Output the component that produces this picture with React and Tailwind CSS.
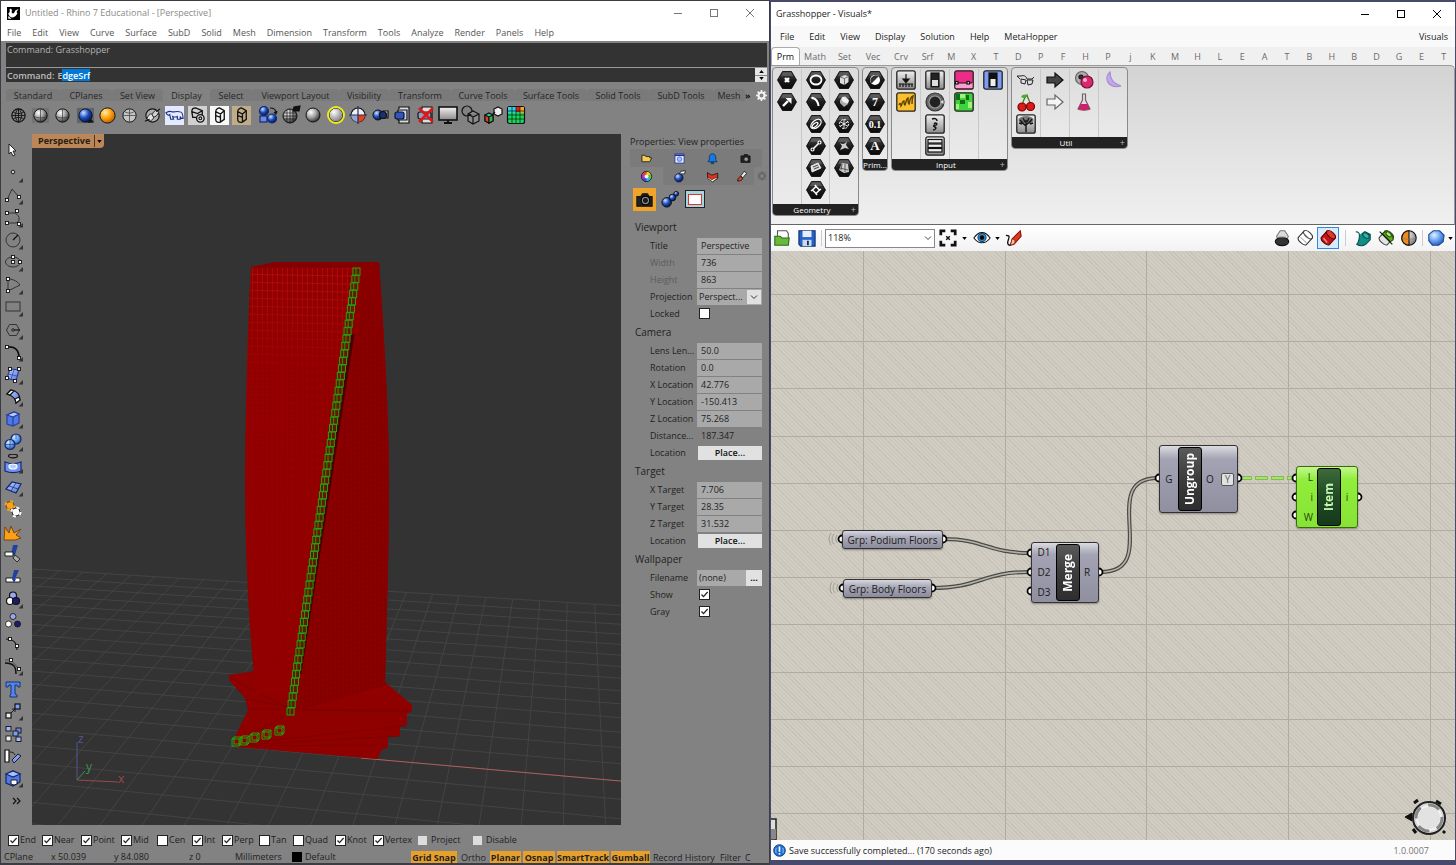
import { useEffect, useRef } from "react";

/* ---------- shared bits ---------- */

// Gradients used by many of the small icons
function SharedDefs() {
  const balls = [
    ["ballGray", "#ffffff", "#a2a2a2", "#2b2b2b"],
    ["ballBlue", "#cfe0ff", "#1d4fc4", "#04103f"],
    ["ballSky", "#dff0ff", "#6fa8f0", "#2459b8"],
    ["ballOrange", "#fff0a8", "#ffa310", "#b55c00"],
    ["ballYellow", "#ffffff", "#b9b9b9", "#777777"],
  ];
  return (
    <svg className="absolute h-0 w-0" aria-hidden="true">
      <defs>
        {balls.map(([id, a, b, c]) => (
          <radialGradient key={id} id={id} cx="35%" cy="30%" r="75%">
            <stop offset="0" stopColor={a} />
            <stop offset="0.5" stopColor={b} />
            <stop offset="1" stopColor={c} />
          </radialGradient>
        ))}
        <linearGradient id="steel" x1="0" y1="0" x2="0" y2="1">
          <stop offset="0" stopColor="#f2f2f2" />
          <stop offset="1" stopColor="#8a8a8a" />
        </linearGradient>
        <linearGradient id="bluePlate" x1="0" y1="0" x2="1" y2="1">
          <stop offset="0" stopColor="#c3d4ff" />
          <stop offset="1" stopColor="#4a6fe0" />
        </linearGradient>
        <linearGradient id="hexFill" x1="0" y1="0" x2="0" y2="1">
          <stop offset="0" stopColor="#4a4a4a" />
          <stop offset="0.5" stopColor="#1c1c1c" />
          <stop offset="1" stopColor="#0a0a0a" />
        </linearGradient>
      </defs>
    </svg>
  );
}

function Icon({ children, className = "h-5 w-5" }) {
  return (
    <svg viewBox="0 0 20 20" fill="none" stroke="#111" strokeWidth="1.2" className={`shrink-0 ${className}`} aria-hidden="true">
      {children}
    </svg>
  );
}

const Ball = ({ cx = 10, cy = 10, r = 7, fill = "url(#ballGray)" }) => (
  <circle cx={cx} cy={cy} r={r} fill={fill} stroke="#111" strokeWidth="1" />
);

// Tilted cylinder, used by the preview buttons
const Cylinder = ({ body, cap, line }) => (
  <g transform="rotate(42 10 10)" stroke={line}>
    <path d="M4 5v9c0 4 12 4 12 0V5z" fill={body} />
    <ellipse cx="10" cy="5" rx="6" ry="3" fill={cap} />
  </g>
);

function Check({ id, checked, disabled }) {
  return (
    <span className="grid shrink-0">
      <input
        id={id}
        type="checkbox"
        defaultChecked={checked}
        disabled={disabled}
        className="peer col-start-1 row-start-1 h-[11px] w-[11px] appearance-none border border-[#222] bg-white disabled:h-[9px] disabled:w-[9px] disabled:border-0 disabled:bg-[#ddd]"
      />
      <svg viewBox="0 0 11 11" className="pointer-events-none col-start-1 row-start-1 hidden h-[11px] w-[11px] peer-checked:block" aria-hidden="true">
        <path d="M2.5 5.5 4.5 7.7 8.6 3" fill="none" stroke="#222" strokeWidth="1.2" />
      </svg>
    </span>
  );
}

function WindowButtons({ color }) {
  return (
    <div className={`flex h-full ${color}`}>
      <button aria-label="Minimize" className="grid w-9 place-items-center">
        <svg viewBox="0 0 10 10" className="h-[10px] w-[10px]"><path d="M1 5.5h8" stroke="currentColor" /></svg>
      </button>
      <button aria-label="Maximize" className="grid w-9 place-items-center">
        <svg viewBox="0 0 10 10" className="h-[10px] w-[10px]"><rect x="1.5" y="1.5" width="7" height="7" fill="none" stroke="currentColor" /></svg>
      </button>
      <button aria-label="Close" className="grid w-9 place-items-center">
        <svg viewBox="0 0 10 10" className="h-[10px] w-[10px]"><path d="m1 1 8 8M9 1 1 9" stroke="currentColor" /></svg>
      </button>
    </div>
  );
}

/* ---------- Rhino: data ---------- */

const RHINO_MENU = ["File", "Edit", "View", "Curve", "Surface", "SubD", "Solid", "Mesh", "Dimension", "Transform", "Tools", "Analyze", "Render", "Panels", "Help"];

const TOOL_TABS = [
  ["Standard", "w-[54px]"],
  ["CPlanes", "w-[52px]"],
  ["Set View", "w-[51px]"],
  ["Display", "w-[47px]"],
  ["Select", "w-[42px]"],
  ["Viewport Layout", "w-[87px]"],
  ["Visibility", "w-[50px]"],
  ["Transform", "w-[62px]"],
  ["Curve Tools", "w-[64px]"],
  ["Surface Tools", "w-[72px]"],
  ["Solid Tools", "w-[62px]"],
  ["SubD Tools", "w-[64px]"],
  ["Mesh", "w-8"],
];

const globe = <path d="M10 3v14M3 10h14M4.5 6.5c3 2 8 2 11 0M4.5 13.5c3-2 8-2 11 0M10 3c-4.500 4-4.500 10 0 14M10 3c4.500 4 4.500 10 0 14" strokeWidth="0.9" />;
const penBox = <path d="M6 6c0-3 3-4 4-4l5 3v9l-4 3c-4 1-5-1-5-3zM6 6l5 2.500 4-3.500M11 8.500V17M6 10l5 2" strokeWidth="1.400" />;

const DISPLAY_ICONS_A = [
  ["Wireframe", <><circle cx="10" cy="10" r="7" />{globe}</>],
  ["Shaded", <><rect x="1" y="2" width="18" height="16" fill="#747474" stroke="none" /><Ball /><path d="M10 3v14M3 11c4 2 10 2 14 0" stroke="#333" strokeWidth="0.7" /></>],
  ["Shade selected", <><Ball /><path d="M10 3v14M3 11c4 2 10 2 14 0" stroke="#333" strokeWidth="0.7" /></>],
  ["Rendered", <><path d="M1 2h18v16H1z" fill="#5e6470" stroke="none" /><Ball fill="url(#ballBlue)" /><path d="m12 18 7-1-3-3z" fill="#111" stroke="none" /></>],
  ["Raytraced", <Ball fill="url(#ballOrange)" r={8} />],
  ["Ghosted", <><Ball fill="#c6c6c6" /><path d="M10 3v14M3 10h14M5 6c3 2 7 2 10 0" stroke="#444" strokeWidth="0.8" /></>],
  ["X-Ray", <><circle cx="10" cy="10" r="7" fill="#b0b0b0" /><ellipse cx="8" cy="12" rx="3" ry="4" transform="rotate(40 8 12)" fill="#e4e4e4" strokeWidth="0.800" /><ellipse cx="13" cy="8" rx="2.500" ry="4" transform="rotate(40 13 8)" fill="#d0d0d0" strokeWidth="0.800" /><path d="m2 16 5-2M14 6l4-3" /></>],
  ["Artistic", <><rect width="20" height="20" fill="#e4eaff" stroke="none" /><path d="M1 7c1 3 3 3 4 2l1 5h3l-1-3c2 1 3 1 5 0v3h3v-3l1 2h2c0-5-1-7-4-7-4-1-5 1-8 0-2-1-4 0-6 1z" stroke="#1c2f8f" strokeWidth="1.200" /></>],
  ["Pen", <><rect width="20" height="20" fill="#d0d0d0" stroke="none" /><path d="M4 6c0-3 2-4 4-4l7 3v4l-4 3H5zM4 6l6 2 5-3" strokeWidth="1.400" /><circle cx="13" cy="13" r="4" fill="#ddd" strokeWidth="1.400" /><circle cx="13" cy="13" r="1.500" /></>],
  ["Technical", <><rect width="20" height="20" fill="#f8f8f8" stroke="none" />{penBox}</>],
  ["Monochrome", <><rect width="20" height="20" fill="#c0ad88" stroke="none" />{penBox}</>],
];

const DISPLAY_ICONS_B = [
  ["Sync views", <><circle cx="6" cy="6" r="4.500" fill="url(#ballBlue)" stroke="#14296b" /><rect x="2" y="11" width="7" height="6" fill="#6b8be6" stroke="#14296b" /><circle cx="14" cy="13.500" r="4.500" fill="url(#ballBlue)" stroke="#14296b" /><path d="M12 3c4 0 6 2 6 5m-2-1 2 2 1-3" /></>],
  ["Flat shade", <><Ball cx={9} cy={11} /><path d="M9 4v14M2 11h14M3 8h12M3 14h12M6 5v12M12 5v12" strokeWidth="0.7" /><path d="m12 6 1-4 6-1-1 5z" fill="#111" /></>],
  ["Matte", <Ball />],
  ["Edges on", <><Ball r={7} fill="url(#ballYellow)" /><circle cx="10" cy="10" r="8" fill="none" stroke="#f0ea20" strokeWidth="2" /></>],
  ["Clipping", <><circle cx="10" cy="10" r="7" fill="#f0f0f4" /><path d="M10 10h7a7 7 0 0 1-7 7z" fill="#e8401c" stroke="none" /><path d="M10 10H3a7 7 0 0 0 7 7z" fill="#8fa6cf" stroke="none" /><path d="M10 1v18M1 10h18" stroke="#20315e" /></>],
  ["Cylinder", <><Ball cx={7} cy={10} r={5} fill="url(#ballBlue)" /><path d="M12 6h5v7h-5z" fill="url(#steel)" /><circle cx="12" cy="10" r="3.500" fill="#1c2f6f" /></>],
  ["Capture", <><path d="M6 4V2h10v16H6v-3" fill="#ddd" /><path d="M5 5h9v10H5z" fill="#c9d4f2" /><rect x="2" y="7" width="9" height="7" rx="2" fill="#3056c4" /></>],
  ["Capture off", <><path d="M6 4V2h10v16H6v-3" fill="#ddd" /><rect x="2" y="7" width="13" height="7" rx="2" fill="#8f9bc4" /><path d="m3 3 14 14M17 3 3 17" stroke="#e01515" strokeWidth="2.600" /></>],
  ["Full screen", <><rect x="1" y="2" width="18" height="13" fill="url(#steel)" strokeWidth="1.600" /><path d="M6 18h8M10 15v3" strokeWidth="2" /></>],
  ["Options", <><circle cx="6" cy="6" r="5" /><path d="m7 9 5-3 6 3v7l-6 3-5-3zM7 9l5 3 6-3M12 12v7" fill="#8c8c8c" /></>],
  ["Colors", <><path d="m2 10 4-2 4 2v6l-4 2-4-2z" fill="#23c9a0" /><path d="m2 10 4 2v6l-4-2z" fill="#e33d28" /><path d="m6 12 4-2v6l-4 2z" fill="#35b843" /><path d="m11 4 4-2 4 2v5l-4 2-4-2z" fill="#eee" /><path d="m9 10 3-3" /></>],
  ["Layers", <><rect x="1.500" y="1.500" width="17" height="17" rx="2" fill="#16d95a" /><path d="M2 2h8v6H2z" fill="#28d4e6" stroke="none" /><path d="M10 2h4v5h-4z" fill="#d22" stroke="none" /><path d="M14 2h4v6h-4z" fill="#f6a31a" stroke="none" /><path d="M6 2v16M10 2v16M14 2v16M2 6h16M2 10h16M2 14h16" strokeWidth="0.700" /></>],
];

const pt = (x, y) => <rect key={`${x}-${y}`} x={x - 1.5} y={y - 1.5} width="3" height="3" fill="#fff" stroke="#111" strokeWidth="0.9" />;

// [name, has fly-out corner, drawing]
const SIDE_TOOLS = [
  ["Select", false, <path d="M6 4v10l2-2 2 4 2-1-2-4h3z" fill="#fff" strokeWidth="0.900" />],
  ["Point", true, <circle cx="10" cy="9" r="1.800" fill="#ccc" strokeWidth="0.900" />],
  ["Polyline", true, <><path d="m4 15 5-11 7 8" stroke="#333" strokeWidth="1" />{pt(4, 15)}{pt(16, 12)}</>],
  ["Curve", true, <><path d="M4 5h8c6 3 5 10 0 10H4" stroke="#333" strokeWidth="1" />{pt(4, 5)}{pt(14, 3)}{pt(4, 15)}{pt(16, 16)}</>],
  ["Circle", true, <><circle cx="10" cy="10" r="7" stroke="#333" strokeWidth="1" /><path d="m10 10 5-5" /></>],
  ["Ellipse", true, <><ellipse cx="10" cy="10" rx="7.500" ry="5" stroke="#333" strokeWidth="1" />{pt(10, 5)}{pt(10, 10)}{pt(17, 10)}</>],
  ["Arc", true, <><path d="M5 4c6 0 10 3 12 6L5 16z" stroke="#333" strokeWidth="1" />{pt(5, 4)}{pt(5, 16)}</>],
  ["Rectangle", true, <rect x="3" y="5" width="14" height="9" stroke="#333" strokeWidth="1" />],
  ["Polygon", true, <><path d="M6.500 4.500h7l3 5.500-3 5.500h-7L3.500 10z" stroke="#333" strokeWidth="1" /><circle cx="10" cy="10" r="1.300" strokeWidth="0.800" /><path d="M11 10h6" /></>],
  ["Fillet", true, <><path d="M4 5c9-1 12 4 12 11" strokeWidth="1.800" />{pt(4, 5)}{pt(16, 16)}</>],
  ["Surface", true, <><path d="m7 4 9 1-3 11-9-3z" fill="url(#bluePlate)" stroke="#2a3f9a" /><path d="m5 9 9 2M11 5l-3 9" stroke="#2a3f9a" strokeWidth="0.700" />{pt(7, 4)}{pt(16, 4)}{pt(12, 16)}{pt(4, 13)}</>],
  ["Sweep", true, <><path d="m4 7 4-4c6 1 9 5 9 10l-4 3c0-4-3-7-9-9z" fill="url(#bluePlate)" /><path d="m4 7 4-4 3 1-4 4z" fill="#fff" /><path d="m13 16-1-4 4-2 1 3z" fill="#fff" /></>],
  ["Box", true, <><path d="m4 6 7-3 5 2v9l-6 3-6-2z" fill="#4f79e6" stroke="#2a3f9a" /><path d="m4 6 6 2 6-3-5-2z" fill="#b7cbff" stroke="#2a3f9a" /><path d="M10 8v9" stroke="#2a3f9a" /></>],
  ["Boolean", true, <><circle cx="13" cy="7" r="5" fill="url(#ballSky)" stroke="#14296b" /><circle cx="7" cy="12.500" r="5" fill="url(#ballSky)" stroke="#14296b" /><path d="M7 7.500v10M2 12.500h10M13 2v5" stroke="#14296b" strokeWidth="0.600" /></>],
  ["Project", true, <><ellipse cx="10" cy="2" rx="4.500" ry="1.800" /><path d="M2 8c5 2 11 2 16 0v9c-5 2-11 2-16 0z" fill="#6f92f2" stroke="#14296b" /><ellipse cx="10" cy="12.500" rx="4" ry="2.500" fill="#b7cbff" stroke="#fff" /></>],
  ["Mesh", true, <><path d="m3 12 6-7 9 2-5 9z" fill="url(#bluePlate)" stroke="#14296b" /><path d="m6 9 9 3M13 6l-5 8" stroke="#14296b" strokeWidth="0.700" /></>],
  ["Join", false, <><circle cx="7" cy="6.500" r="4" fill="#f5a51f" stroke="#5c3a00" strokeWidth="0.900" /><circle cx="7" cy="6.500" r="4.500" stroke="#f5a51f" strokeWidth="2" strokeDasharray="3 4" /><circle cx="13" cy="13" r="4" fill="#fff" strokeWidth="0.900" /><circle cx="13" cy="13" r="4.500" stroke="#fff" strokeWidth="2" strokeDasharray="3 4" /></>],
  ["Explode", false, <path d="m1 18 1-13 4 6 2-7 3 7 7-4-5 6 5 3-6 2z" fill="#f9a01b" stroke="#7a3b00" strokeWidth="0.900" />],
  ["Trim", false, <><path d="M10 1h5l-3 10H8z" fill="#20429c" stroke="none" /><path d="M2 8h8v4H2z" fill="#fff" strokeWidth="0.900" /><path d="m12 11 5 4-3 3-4-4z" fill="#aaa" strokeWidth="0.800" /></>],
  ["Split", false, <><path d="M3 11h14v4H3z" fill="#fff" strokeWidth="0.900" /><path d="M11 3h5l-4 9h-3zM9 12l2 4 2-4z" fill="#20429c" stroke="none" /></>],
  ["Group", true, <><circle cx="10" cy="6.500" r="3.500" fill="#9aa6f0" /><circle cx="7" cy="12" r="3.500" fill="#fff" /><circle cx="13" cy="12" r="3.500" fill="#1a1c6d" /></>],
  ["Ungroup", false, <><circle cx="10" cy="5.500" r="3" fill="#9aa6f0" strokeWidth="0.800" /><circle cx="5.500" cy="13" r="3" fill="#fff" strokeWidth="0.800" /><circle cx="14.500" cy="13" r="3" fill="#1a1c6d" strokeWidth="0.800" /></>],
  ["Edit points", false, <><path d="M3 5c8 0 11 4 11 11" />{pt(7, 5)}{pt(14, 12)}</>],
  ["Control points", true, <><path d="M2 7c9 0 11 4 11 11" strokeWidth="1.500" /><path d="M2 4h6l8 9" stroke="#444" strokeWidth="0.8" />{pt(8, 4)}{pt(16, 13)}</>],
  ["Text", false, <path d="M3 3h14v5h-2l-1-2h-2v9l2 1v2H7v-2l1-1V6H6L5 8H3z" fill="#4f86f0" stroke="#14296b" strokeWidth="0.900" />],
  ["Move", true, <><rect x="3" y="12" width="5" height="5" fill="#eee" /><rect x="12" y="3" width="5" height="5" fill="#7d9df5" /><path d="m8 12 4-4m-3 0h3v3" strokeWidth="0.900" /></>],
  ["Copy", false, <><rect x="3" y="2.500" width="5" height="4.500" fill="#9fb8ff" strokeWidth="0.900" /><rect x="13" y="4" width="5" height="5" fill="#6b8be6" strokeWidth="0.900" /><rect x="10" y="7" width="5" height="5" fill="#7d9df5" strokeWidth="0.900" /><rect x="3" y="12" width="5" height="5" fill="#eee" strokeWidth="0.900" /><rect x="13" y="13" width="5" height="4.500" fill="#9fb8ff" strokeWidth="0.900" /></>],
  ["Rotate", false, <><path d="M2 4h4v12H2z" fill="#fff" /><path d="m9 14 6-6 3 2-7 7z" fill="#7d9df5" strokeWidth="0.900" /><path d="M7 6c3 0 4 1 5 3" strokeWidth="0.900" /></>],
  ["Solid edit", true, <><path d="m3 6 7-3 7 3v8l-7 4-7-3z" fill="#4f79e6" stroke="#14296b" /><path d="m3 6 7-3 7 3-7 3z" fill="#a9c0ff" stroke="#14296b" /><path d="M8 12h6v4l-3 1-3-1z" fill="#fff" strokeWidth="0.900" /></>],
  ["More", false, <path d="m10 7 3 3-3 3m4-6 3 3-3 3" strokeWidth="1.200" />],
];

const PANEL_TABS_TOP = [
  ["Files", <path d="M3 15V5h5l1 2h6v2h3l-3 6z" fill="#f6cf52" />],
  ["Display", <><rect x="3" y="3" width="14" height="14" fill="#e6ecff" stroke="#1c2f8f" /><path d="M3 5h14" stroke="#1c2f8f" strokeWidth="2.500" /><circle cx="10" cy="11" r="3.500" stroke="#3c63d8" fill="#a9c0ff" /></>],
  ["Notifications", <path d="M3 15h14l-2-3V8c0-7-10-7-10 0v4zM8 16h4v2H8z" fill="#1678e0" stroke="#08345f" />],
  ["Camera", <><path d="M3 6h4l1-2h5l1 2h3v10H3z" fill="#222" /><circle cx="11" cy="11" r="3.500" fill="#999" /></>],
];

const PANEL_TABS_BOTTOM = [
  ["Layers", <><path d="M10 10V2a8 8 0 0 1 7 4z" fill="#f7d21b" stroke="none" /><path d="m10 10 7-4a8 8 0 0 1 0 8z" fill="#58c93b" stroke="none" /><path d="m10 10 7 4a8 8 0 0 1-7 4z" fill="#2ab8d8" stroke="none" /><path d="M10 10v8a8 8 0 0 1-7-4z" fill="#3a4be0" stroke="none" /><path d="m10 10-7 4a8 8 0 0 1 0-8z" fill="#b52ad8" stroke="none" /><path d="M10 10 3 6a8 8 0 0 1 7-4z" fill="#f0402a" stroke="none" /><circle cx="10" cy="10" r="3" fill="#f3f3f3" stroke="none" /><circle cx="10" cy="10" r="8" /></>],
  ["Properties", <><Ball cx={9} cy={12} r={6.5} fill="url(#ballBlue)" /><path d="m10 6 2-4 7-1-1 5z" fill="#eee" /></>],
  ["Materials", <><path d="m2 4 7 4 9-3v8l-8 5-7-5z" fill="#e33214" /><path d="m3 11 6 4 8-4v2l-7 5-7-5z" fill="#fff" strokeWidth="0.800" /></>],
  ["Paint", <><path d="m9 9 5-7 4 3-6 7z" fill="#e8e8e8" /><path d="M4 17c0-4 2-6 5-7l3 3c-1 3-4 4-8 4z" fill="#d8402c" /></>],
];

/* ---------- Rhino: perspective viewport ---------- */

// Camera of the viewport, same numbers as the properties panel
const CAM = [42.776, -150.413, 75.268];
const FWD = [-0.1872, 0.9543, -0.2335];
const RIGHT = [0.9813, 0.1925, 0];
const UP = [-0.0449, 0.2291, 0.9725];
const dot = (a, b) => a[0] * b[0] + a[1] * b[1] + a[2] * b[2];

function project(x, y, z = 0) {
  const d = [x - CAM[0], y - CAM[1], z - CAM[2]];
  const depth = dot(d, FWD);
  return [(294.5 + (dot(d, RIGHT) / depth) * 1227).toFixed(1), (345.5 - (dot(d, UP) / depth) * 1227).toFixed(1)];
}

function GroundLine({ from, to, stroke = "#484848" }) {
  const [x1, y1] = project(...from);
  const [x2, y2] = project(...to);
  return <line x1={x1} y1={y1} x2={x2} y2={y2} stroke={stroke} strokeWidth="0.8" />;
}

const STEPS = Array.from({ length: 29 }, (_, i) => -70 + i * 5);
const FLOORS = Array.from({ length: 60 }, (_, i) => i / 59);

function Scene() {
  return (
    <svg viewBox="0 0 589 691" preserveAspectRatio="xMinYMin slice" className="h-full w-full" role="img" aria-label="Tower model in perspective">
      <defs>
        <pattern id="cells" width="5" height="8" patternUnits="userSpaceOnUse" patternTransform="skewY(1)">
          <path d="M0 0h5M0 0v8" stroke="#e01818" strokeWidth="0.8" fill="none" />
          <path d="M2 2v6" stroke="#7d0000" strokeWidth="0.6" />
        </pattern>
        <pattern id="darkCells" width="4" height="5" patternUnits="userSpaceOnUse" patternTransform="skewY(-12)">
          <path d="M0 0h4M0 0v5" stroke="#5c0000" strokeWidth="0.7" fill="none" />
        </pattern>
        <linearGradient id="cellFade" x1="0" y1="0" x2="0" y2="1">
          <stop offset="0" stopColor="#fff" stopOpacity="0.9" />
          <stop offset="0.25" stopColor="#fff" stopOpacity="0.15" />
          <stop offset="1" stopColor="#fff" stopOpacity="0.02" />
        </linearGradient>
        <mask id="cellMask"><rect x="200" y="130" width="180" height="420" fill="url(#cellFade)" /></mask>
      </defs>

      {/* Ground grid */}
      {STEPS.map((s) => <GroundLine key={`x${s}`} from={[s, 70]} to={[s, -60]} />)}
      {STEPS.map((s) => <GroundLine key={`y${s}`} from={[-70, s]} to={[70, s]} />)}
      <GroundLine from={[18, 0]} to={[70, 0]} stroke="#c86464" />

      {/* Podium */}
      <path d="M197 541 223 537 230 520H348L353 548 380 571V577L375 580V591L368 592V602L356 603V613L350 616 345 625 203 613 201 607 216 576 213 564 197 546z" fill="#8f0000" />
      <g stroke="#7a0000" strokeWidth="0.7" fill="none">
        <path d="m204 608 60-32h115M206 610l168-18M207 611l160-9M208 612l146-1M200 545l60 31M216 575l160 3M214 565l60 11" />
      </g>

      {/* Tower */}
      <path d="M219 133 244 128 347 128C352 200 357 280 357 346 357 430 354 500 353 560H224C215 480 213 400 213 336 214 270 215 200 219 133z" fill="#920000" />
      <path d="M219 134 328 134 258 560H224C215 480 213 400 213 336 214 270 215 200 219 134z" fill="url(#cells)" mask="url(#cellMask)" />
      <path d="M219 133 244 128H347l-18 6z" fill="#850000" />
      <path d="M330 134 347 128C352 200 357 280 357 346 357 430 354 500 353 552L268 576 258 584z" fill="#8a0000" />
      <path d="M335 150 350 200C356 300 358 400 353 552L264 576z" fill="url(#darkCells)" opacity="0.5" />

      {/* Selected boxes running up the edge */}
      <path d="M321 200 268 540" stroke="#2d0000" strokeWidth="3" opacity="0.7" />
      {FLOORS.map((t) => {
        const x = 259 + t * 66;
        const y = 578 - t * 440;
        return (
          <g key={t} fill="none" stroke="#1fa70c" strokeWidth="1">
            <rect x={x - 4} y={y - 4} width="7" height="7" fill="#3a2a00" fillOpacity="0.5" />
            <path d={`M${x - 1} ${y - 4}v7`} strokeWidth="0.9" />
          </g>
        );
      })}
      {[[204, 608], [212, 607], [222, 604], [234, 601], [247, 597]].map(([x, y]) => (
        <g key={x} fill="none" stroke="#1fa70c" strokeWidth="1">
          <path d={`M${x - 4} ${y - 3}h7v7h-7zM${x - 2} ${y - 5}h7v7h-7zM${x - 4} ${y - 3}l2-2M${x + 3} ${y - 3}l2-2M${x + 3} ${y + 4}l2-2`} />
        </g>
      ))}

      {/* Axis marker */}
      <g fill="none" strokeWidth="1">
        <path d="M45 646v-38" stroke="#55559a" />
        <path d="m45 646 8-9" stroke="#3f9150" />
        <path d="m45 646 41 2" stroke="#9a4a4a" />
      </g>
      <g fontFamily="'Open Sans', sans-serif" fontSize="12">
        <text x="46" y="609" fill="#55559a">z</text>
        <text x="54" y="637" fill="#3f9150">y</text>
        <text x="86" y="649" fill="#9a4a4a">x</text>
      </g>
    </svg>
  );
}

/* ---------- Rhino: properties panel ---------- */

function PropRow({ label, dim, children, id }) {
  return (
    <div className="flex h-[17px] items-center">
      <label htmlFor={id} className={`w-[47px] shrink-0 whitespace-nowrap ${dim ? "text-[#5c5c5c]" : "text-[#1f1f1f]"}`}>{label}</label>
      <div className="flex w-[65px] items-center">{children}</div>
    </div>
  );
}

function Field({ id, value }) {
  return <input id={id} defaultValue={value} className="h-4 w-full bg-[#a9a9a9] px-1 text-[#1f1f1f]" />;
}

const PropHeading = ({ children }) => <h3 className="flex h-5 items-center pl-[5px] text-[10px] text-[#1f1f1f]">{children}</h3>;

const PlaceButton = ({ id }) => (
  <button id={id} className="ml-px h-[14px] w-full bg-[#e1e1e1] font-semibold leading-[13px] text-[#111]">Place...</button>
);

function PropertiesPanel() {
  return (
    <aside className="w-[148px] shrink-0 overflow-hidden pl-[9px]">
      <h2 className="flex h-[15px] items-center text-[#1f1f1f]">Properties: View properties</h2>
      <div className="flex h-[18px]">
        {PANEL_TABS_TOP.map(([name, art]) => (
          <button key={name} aria-label={name} className="grid w-[33px] place-items-center bg-[#7b7b7b]"><Icon className="h-[13px] w-[13px]">{art}</Icon></button>
        ))}
      </div>
      <div className="flex h-[18px] items-center">
        {PANEL_TABS_BOTTOM.map(([name, art], i) => (
          <button key={name} aria-label={name} className={`grid h-full place-items-center ${i === 0 ? "" : "bg-[#7b7b7b]"} ${i === 3 ? "w-[25px]" : "w-[33px]"}`}><Icon className="h-[13px] w-[13px]">{art}</Icon></button>
        ))}
        <button aria-label="Panel options" className="ml-[3px]">
          <Icon className="h-[10px] w-[10px]"><circle cx="10" cy="10" r="6" stroke="#6b6b6b" strokeWidth="4" /><path d="M10 0v20M0 10h20M3 3l14 14M17 3 3 17" stroke="#6b6b6b" strokeWidth="2" /><circle cx="10" cy="10" r="3" fill="#828282" stroke="none" /></Icon>
        </button>
      </div>
      <div className="flex h-7 items-center gap-[3px] pl-[3px]">
        <button aria-label="Viewport" className="grid h-[23px] w-[23px] place-items-center bg-[#f0a52a]">
          <Icon className="h-[19px] w-[19px]"><path d="M2 7h4l2-3h5l2 3h3v10H2z" fill="#222" /><circle cx="11" cy="11" r="4.500" fill="#8a8a8a" stroke="#000" /><circle cx="11" cy="11" r="2" fill="#222" /></Icon>
        </button>
        <button aria-label="Material" className="grid h-[23px] w-[23px] place-items-center">
          <Icon className="h-[19px] w-[19px]"><Ball cx={6} cy={13} r={5} fill="url(#ballBlue)" /><Ball cx={12} cy={8} r={3.5} fill="url(#ballBlue)" /><Ball cx={16} cy={4} r={2.5} fill="url(#ballBlue)" /></Icon>
        </button>
        <button aria-label="Frame" className="grid h-[18px] w-[20px] place-items-center border border-[#222] bg-[#a9d4e0]">
          <span className="h-[11px] w-[14px] border border-[#d83a2a] bg-white" />
        </button>
      </div>

      <div className="pt-1">
        <PropHeading>Viewport</PropHeading>
        <div className="pl-5">
          <PropRow label="Title" id="title"><Field id="title" value="Perspective" /></PropRow>
          <PropRow label="Width" id="width" dim><Field id="width" value="736" /></PropRow>
          <PropRow label="Height" id="height" dim><Field id="height" value="863" /></PropRow>
          <PropRow label="Projection" id="projection">
            <span className="grid h-4 w-full">
              <select id="projection" className="col-start-1 row-start-1 w-full appearance-none bg-[#a9a9a9] px-[2px] text-[#1f1f1f]"><option>Perspect...</option></select>
              <span className="pointer-events-none col-start-1 row-start-1 my-px mr-px grid w-[14px] place-items-center justify-self-end bg-[#e1e1e1]">
                <svg viewBox="0 0 8 8" className="h-2 w-2"><path d="m1 2.500 3 3 3-3" fill="none" stroke="#333" /></svg>
              </span>
            </span>
          </PropRow>
          <PropRow label="Locked" id="locked"><span className="pl-[2px]"><Check id="locked" /></span></PropRow>
        </div>
        <PropHeading>Camera</PropHeading>
        <div className="pl-5">
          <PropRow label="Lens Len..." id="lens"><Field id="lens" value="50.0" /></PropRow>
          <PropRow label="Rotation" id="rot"><Field id="rot" value="0.0" /></PropRow>
          <PropRow label="X Location" id="xl"><Field id="xl" value="42.776" /></PropRow>
          <PropRow label="Y Location" id="yl"><Field id="yl" value="-150.413" /></PropRow>
          <PropRow label="Z Location" id="zl"><Field id="zl" value="75.268" /></PropRow>
          <PropRow label="Distance..."><output className="px-1 text-[#1f1f1f]">187.347</output></PropRow>
          <PropRow label="Location" id="camPlace"><PlaceButton id="camPlace" /></PropRow>
        </div>
        <PropHeading>Target</PropHeading>
        <div className="pl-5">
          <PropRow label="X Target" id="xt"><Field id="xt" value="7.706" /></PropRow>
          <PropRow label="Y Target" id="yt"><Field id="yt" value="28.35" /></PropRow>
          <PropRow label="Z Target" id="zt"><Field id="zt" value="31.532" /></PropRow>
          <PropRow label="Location" id="tgtPlace"><PlaceButton id="tgtPlace" /></PropRow>
        </div>
        <PropHeading>Wallpaper</PropHeading>
        <div className="pl-5">
          <PropRow label="Filename" id="file">
            <input id="file" defaultValue="(none)" className="h-4 w-[49px] bg-[#a9a9a9] px-[2px] text-[#1f1f1f]" />
            <button aria-label="Browse" className="h-4 w-4 bg-[#e1e1e1] font-bold leading-none text-[#111]">...</button>
          </PropRow>
          <PropRow label="Show" id="show"><span className="pl-[2px]"><Check id="show" checked /></span></PropRow>
          <PropRow label="Gray" id="gray"><span className="pl-[2px]"><Check id="gray" checked /></span></PropRow>
        </div>
      </div>
    </aside>
  );
}

/* ---------- Rhino: window ---------- */

const OSNAPS = [
  ["End", true, "w-[34px]"],
  ["Near", true, "w-[39px]"],
  ["Point", true, "w-10"],
  ["Mid", true, "w-9"],
  ["Cen", false, "w-[35px]"],
  ["Int", true, "w-[30px]"],
  ["Perp", true, "w-[37px]"],
  ["Tan", false, "w-[34px]"],
  ["Quad", false, "w-[42px]"],
  ["Knot", true, "w-[38px]"],
  ["Vertex", true, "w-[45px]"],
];

function CommandPrompt() {
  const ref = useRef(null);

  // Auto-complete leaves the completed part selected
  useEffect(() => {
    ref.current.focus();
    ref.current.setSelectionRange(1, 7);
  }, []);

  return (
    <div className="flex h-[14px] items-center bg-[#333] pl-px font-semibold text-[#bdbdbd]">
      <label htmlFor="command" className="pr-[3px] leading-none">Command:</label>
      <input ref={ref} id="command" defaultValue="EdgeSrf" className="h-3 min-w-0 flex-1 bg-transparent leading-none outline-none selection:bg-[#0078d7] selection:text-white" />
      <span className="flex h-full w-3 flex-col bg-[#e6e6e6]">
        <button aria-label="Previous command" className="grid flex-1 place-items-center"><svg viewBox="0 0 6 4" className="h-[3px] w-[5px]"><path d="m0 4 3-4 3 4z" /></svg></button>
        <button aria-label="Next command" className="grid flex-1 place-items-center border-t border-[#888]"><svg viewBox="0 0 6 4" className="h-[3px] w-[5px]"><path d="m0 0 3 4 3-4z" /></svg></button>
      </span>
    </div>
  );
}

function RhinoWindow() {
  return (
    <section className="flex min-h-0 min-w-0 flex-col overflow-hidden border-x border-t border-b-2 border-[#3c3c44] bg-[#828282] text-[9px]">
      <header className="flex h-6 shrink-0 items-center justify-between bg-white pr-px pl-[6px]">
        <div className="flex items-center gap-[5px] text-[#8a8a8a]">
          <Icon className="h-[13px] w-[13px]"><rect width="20" height="20" fill="#000" stroke="none" /><path d="M4 3c4-1 4 3 3 5 2 3 4 2 5-1 1-2 3-3 6-3-3 2-4 3-2 6-2 3-3 5-7 6-4 0-6-2-7-6 1-1 3-2 2-7z" fill="#fff" stroke="none" /><path d="m2 14 5 4H2z" fill="#fff" stroke="none" /></Icon>
          <h1>Untitled - Rhino 7 Educational - [Perspective]</h1>
        </div>
        <WindowButtons color="text-[#777]" />
      </header>
      <nav className="flex h-4 shrink-0 items-center gap-[11px] bg-white pl-[6px] text-[#555]">
        {RHINO_MENU.map((item) => <button key={item}>{item}</button>)}
      </nav>

      <div className="shrink-0 pt-[2px] pr-[2px] pb-[7px] pl-[5px]">
        <div className="h-6 bg-[#333] pl-px leading-[14px] text-[#b4b4b4]">Command: Grasshopper</div>
        <div className="h-px bg-[#999]" />
        <CommandPrompt />
      </div>

      <div className="flex h-3 shrink-0 items-center pl-[5px] text-[#262626]">
        {TOOL_TABS.map(([label, width]) => (
          <button key={label} className={`h-full shrink-0 whitespace-nowrap rounded-t leading-[13px] ${width} ${label === "Display" ? "" : "bg-[#7a7a7a]"}`}>{label}</button>
        ))}
        <button aria-label="More tabs" className="font-bold leading-none text-[#111]">»</button>
        <button aria-label="Toolbar options" className="ml-auto pr-[2px]">
          <Icon className="h-[11px] w-[11px]"><circle cx="10" cy="10" r="5.500" stroke="#f2f2f2" strokeWidth="4" /><path d="M10 0v4M10 16v4M0 10h4M16 10h4M3 3l3 3M14 14l3 3M17 3l-3 3M6 14l-3 3" stroke="#f2f2f2" strokeWidth="3" /></Icon>
        </button>
      </div>

      <div className="flex h-[33px] shrink-0 items-start gap-1 pt-[3px] pl-[6px]">
        <div className="flex w-[246px]">
          {DISPLAY_ICONS_A.map(([name, art]) => <button key={name} aria-label={name} className="grid h-[22px] flex-1 place-items-center"><Icon className="h-[19px] w-[19px]">{art}</Icon></button>)}
        </div>
        <div className="flex w-[270px]">
          {DISPLAY_ICONS_B.map(([name, art]) => <button key={name} aria-label={name} className="grid h-[22px] flex-1 place-items-center"><Icon className="h-5 w-5">{art}</Icon></button>)}
        </div>
      </div>

      <div className="flex min-h-0 flex-1">
        <div className="flex w-[31px] shrink-0 flex-col pt-[5px] pb-[13px] pl-[2px]">
          {SIDE_TOOLS.map(([name, flyout, art]) => (
            <button key={name} aria-label={name} className="flex min-h-0 flex-1 items-center">
              <Icon>{art}{flyout && <path d="M20 15v4.500h-4.500z" fill="#333" stroke="none" />}</Icon>
            </button>
          ))}
        </div>
        <main className="relative min-w-0 flex-1 overflow-hidden bg-[#333]">
          <Scene />
          <button className="absolute top-0 left-0 flex h-[14px] items-center rounded-br bg-[#bb8759] pr-[2px] pl-[6px] font-bold text-[#2a1b10]">
            Perspective
            <span className="ml-1 grid h-3 place-items-center border-l border-[#4a3520] pl-[2px]">
              <svg viewBox="0 0 6 4" className="h-[3px] w-[5px]"><path d="m0 0 3 4 3-4z" /></svg>
            </span>
          </button>
        </main>
        <PropertiesPanel />
      </div>

      <div className="flex h-[26px] shrink-0 items-center pt-1 pl-[7px] text-[#1f1f1f]">
        {OSNAPS.map(([label, on, width]) => (
          <span key={label} className={`flex shrink-0 items-center gap-px ${width}`}><Check id={`snap${label}`} checked={on} /><label htmlFor={`snap${label}`}>{label}</label></span>
        ))}
        {["Project", "Disable"].map((label) => (
          <span key={label} className="flex w-[55px] shrink-0 items-center gap-1"><Check id={`snap${label}`} disabled /><label htmlFor={`snap${label}`}>{label}</label></span>
        ))}
      </div>

      <footer className="flex h-3 shrink-0 items-center whitespace-nowrap pl-[3px] text-[#1f1f1f]">
        <span className="w-[47px] shrink-0">CPlane</span>
        <span className="w-[63px] shrink-0">x 50.039</span>
        <span className="w-[75px] shrink-0">y 84.080</span>
        <span className="w-[46px] shrink-0">z 0</span>
        <span className="w-[57px] shrink-0">Millimeters</span>
        <span className="mr-[3px] h-[10px] w-[10px] shrink-0 bg-black" />
        <span className="w-[106px] shrink-0">Default</span>
        <div className="flex h-full items-center gap-[2px]">
          <button className="h-full w-[46px] bg-[#e8a02c] font-bold leading-none">Grid Snap</button>
          <button className="w-[29px] leading-none">Ortho</button>
          <button className="h-full w-[31px] bg-[#e8a02c] font-bold leading-none">Planar</button>
          <button className="h-full w-8 bg-[#e8a02c] font-bold leading-none">Osnap</button>
          <button className="h-full w-[52px] bg-[#e8a02c] font-bold leading-none">SmartTrack</button>
          <button className="h-full w-[39px] bg-[#e8a02c] font-bold leading-none">Gumball</button>
          <button className="px-px leading-none">Record History</button>
          <button className="px-[2px] leading-none">Filter</button>
          <span className="leading-none">C</span>
        </div>
      </footer>
    </section>
  );
}

/* ---------- Grasshopper: ribbon ---------- */

function Hex({ children }) {
  return (
    <>
      <path d="M5.500 1.500h9L19.500 10l-5 8.500h-9L.5 10z" fill="url(#hexFill)" stroke="#000" strokeWidth="0.8" />
      <path d="M6 2.500h8l2 3.500H4z" fill="#777" stroke="none" opacity="0.5" />
      <g stroke="#fff">{children}</g>
    </>
  );
}

const Tile = ({ fill = "url(#steel)", children }) => (
  <>
    <rect x="0.800" y="0.800" width="18.400" height="18.400" rx="2" fill={fill} stroke="#222" strokeWidth="1.300" />
    {children}
  </>
);

const HexText = ({ children, size = 11 }) => (
  <text x="10" y="14" textAnchor="middle" fontFamily="'Liberation Serif', serif" fontWeight="bold" fontSize={size} fill="#fff" stroke="none">{children}</text>
);

const RIBBON = [
  {
    title: "Geometry", width: "w-[87px]", height: "h-[136px]", plus: true,
    columns: [
      [
        ["Point", <Hex><path d="m8 8 4 4m0-4-4 4" strokeWidth="2.400" /></Hex>],
        ["Vector", <Hex><path d="m6 14 5-5" strokeWidth="2.400" /><path d="M8.500 6h6v6z" fill="#fff" stroke="none" /></Hex>],
      ],
      [
        ["Circle", <Hex><ellipse cx="10" cy="10" rx="5.500" ry="4.500" strokeWidth="1.800" /></Hex>],
        ["Arc", <Hex><path d="M7 6c3 1 5 4 5.500 8" strokeWidth="2" /><circle cx="6.500" cy="6" r="1.200" fill="#fff" stroke="none" /></Hex>],
        ["Curve", <Hex><ellipse cx="10" cy="10" rx="6" ry="3.500" transform="rotate(-40 10 10)" strokeWidth="1.300" /><ellipse cx="9" cy="11" rx="3.500" ry="1.500" transform="rotate(-40 9 11)" strokeWidth="1.300" /></Hex>],
        ["Line", <Hex><path d="m7 13 6-6" strokeWidth="1.600" /><circle cx="6.500" cy="13.500" r="1.500" fill="#111" /><circle cx="13.500" cy="6.500" r="1.500" fill="#111" /></Hex>],
        ["Plane", <Hex><path d="m5 8 7-3 3 5-9 4z" fill="#ddd" strokeWidth="0.800" /><path d="m7 9 5-2m-4 4 5-2" stroke="#555" /></Hex>],
        ["Rectangle", <Hex><path d="m10 6.500 3.500 3.500-3.500 3.500L6.500 10z" strokeWidth="1.500" /><path d="M9 5l1 1.500M15 9l-1.500 1M11 15l-1-1.500M5 11l1.500-1" strokeWidth="1.500" /></Hex>],
      ],
      [
        ["Box", <Hex><path d="m6 7 5-2 3.500 1.500V12l-4 3L6 13z" fill="#ddd" stroke="none" /><path d="m6 7 4.500 1.500L14.500 6.500M10.500 8.500V15" stroke="#555" strokeWidth="0.800" /></Hex>],
        ["Brep", <Hex><path d="m6 8 5-4 4 4-1 4-4 3-4-4z" fill="#aaa" stroke="none" /><ellipse cx="11" cy="8" rx="4" ry="2.500" transform="rotate(35 11 8)" fill="#eee" stroke="none" /></Hex>],
        ["Mesh", <Hex><path d="M10 5v10M6 7.500l8 5M14 7.500l-8 5" strokeWidth="0.900" /><circle cx="10" cy="10" r="4.500" strokeWidth="1" strokeDasharray="2 1.500" /></Hex>],
        ["Surface", <Hex><path d="M6 7c3 2 5 1 7-2l-1 4 3 4-4-1-5 2 2-4z" fill="#ccc" stroke="none" /></Hex>],
        ["Twisted box", <Hex><path d="m8 5 6 1 1 8-5 1-5-3z" fill="#ccc" stroke="none" /><path d="m8 6-1 6M11 6v8M6 10l8 2" stroke="#444" strokeWidth="0.800" /></Hex>],
      ],
    ],
  },
  {
    title: "Prim...", width: "w-[26px]", height: "h-[91px]",
    columns: [[
      ["Boolean", <Hex><circle cx="10" cy="10" r="5" fill="#fff" stroke="none" /><path d="M6.500 13.500a5 5 0 0 1 7-7z" fill="#333" stroke="none" /></Hex>],
      ["Integer", <Hex><HexText size={12}>7</HexText></Hex>],
      ["Number", <Hex><HexText size={10}>0.1</HexText></Hex>],
      ["Text", <Hex><HexText size={13}>A</HexText></Hex>],
    ]],
  },
  {
    title: "Input", width: "w-[117px]", height: "h-[91px]", plus: true,
    columns: [
      [
        ["Slider", <Tile><path d="M10 4v6M7 9l3 3.500L13 9z" fill="#111" /><path d="M3 14h14M4 14v3M7 14v3M10 14v3M13 14v3M16 14v3" /></Tile>],
        ["Graph mapper", <Tile fill="#fbc02d"><path d="M3 13c1-3 2-1 2 1 1-1 1-5 3-5 0 2 0 4 1 4 1-2 1-6 3-7 0 3 0 5 1 6 1-3 1-7 4-8-1 3-1 5-1 8" stroke="#5c4100" strokeWidth="1.400" /></Tile>],
      ],
      [
        ["Toggle", <Tile><rect x="6" y="3" width="8" height="14" fill="#222" /><rect x="7" y="10" width="6" height="6" fill="#ddd" stroke="none" /></Tile>],
        ["Knob", <><circle cx="10" cy="10" r="9" fill="#666" stroke="#333" /><circle cx="10" cy="10" r="6" fill="#222" stroke="#999" /><path d="m15 10 3.500-2v4z" fill="#ddd" stroke="none" /></>],
        ["Scroller", <Tile><path d="M7 5c3-1 5 0 5 2M9 10c2-2 4 0 2 1-3 0-3 1-1 2s0 3-2 3" strokeWidth="1.500" /></Tile>],
        ["Value list", <Tile><rect x="3" y="3.500" width="14" height="3.500" fill="#eee" /><rect x="3" y="8" width="14" height="3.500" fill="#eee" /><rect x="3" y="12.500" width="14" height="3.500" fill="#eee" /></Tile>],
      ],
      [
        ["Gradient", <Tile fill="#ec2d86"><path d="M1.500 13h17v5h-17z" fill="#f7a0cb" stroke="none" /><path d="M2 13h16" /><rect x="1.500" y="11.500" width="2.500" height="2.500" fill="#fff" /><rect x="13" y="11.500" width="2.500" height="2.500" fill="#fff" /></Tile>],
        ["Image", <Tile fill="#3fd43a"><path d="M2 2h4v6H2zM6 8h5v4H6zM12 3h3v5h-3z" fill="#0f6d1c" stroke="none" /><path d="M6 2h5v4H6zM14 10h4v6h-4zM2 12h3v5H2z" fill="#a4ef7d" stroke="none" /></Tile>],
      ],
      [
        ["Button", <Tile fill="#7f9cf0"><rect x="6" y="3" width="8" height="14" fill="#111" /><rect x="7.500" y="9" width="5" height="7" fill="#eee" stroke="none" /></Tile>],
      ],
    ],
  },
  {
    title: "Util", width: "w-[117px]", height: "h-[69px]", plus: true,
    columns: [
      [
        ["Glasses", <path d="M1 6h4c3-1 5 0 6 3h5l2-2M5 9l5 1-1 4-4-1zM11 10h6l-1 4-4 1zM1 6l3 3" strokeWidth="0.900" />],
        ["Cherry", <><path d="M6 14C7 9 9 5 11 3c1 4 3 7 4 10" stroke="#3a7d1c" /><path d="M5 5c1-3 5-3 6-2-1 3-4 4-6 2z" fill="#4cae2a" stroke="none" /><circle cx="6" cy="15" r="4" fill="#dc1b1b" stroke="#7d0000" /><circle cx="14.500" cy="14.500" r="4" fill="#dc1b1b" stroke="#7d0000" /></>],
        ["Tree", <Tile><path d="M10 18v-7M10 12 5 8M10 11l5-4M10 12V6M4 6l3 3M16 5l-3 4M3 9l3 1M17 9l-3 1M7 4l2 4M13 4l-2 4" strokeWidth="1.400" /><ellipse cx="10" cy="6" rx="7.500" ry="4" fill="#222" fillOpacity="0.55" stroke="none" /></Tile>],
      ],
      [
        ["Data input", <path d="M2 7h8V3l8 7-8 7v-4H2z" fill="#444" />],
        ["Data output", <path d="M2 7h8V3l8 7-8 7v-4H2z" fill="#f4f4f4" stroke="#666" />],
      ],
      [
        ["Jump", <><circle cx="8" cy="8" r="6.500" fill="#aaa" stroke="#666" /><circle cx="7" cy="7" r="2" fill="#333" /><circle cx="13" cy="12" r="6" fill="#d8286e" stroke="#7d0b3a" /><circle cx="11" cy="10" r="2" fill="#ffb3d0" stroke="none" /></>],
        ["Flask", <><path d="M8 2h4M8.500 2v6L4 17c1 1.500 11 1.500 12 0l-4.500-9V2" fill="#f5d6e4" stroke="#666" /><path d="M6.500 12h7l2.500 5c-1 1.500-11 1.500-12 0z" fill="#c9226b" stroke="none" /></>],
      ],
      [
        ["Moon", <path d="M7 2c-7 6-2 17 11 14C11 14 7 9 7 2z" fill="#c3a7e8" stroke="#a68bd0" />],
      ],
    ],
  },
];

function RibbonGroup({ group }) {
  return (
    <div className={`flex shrink-0 flex-col overflow-hidden rounded border border-[#8a8a8a] bg-linear-to-b from-[#dcdcdc] to-[#ececec] ${group.width}`}>
      <div className={`flex pt-px ${group.height}`}>
        {group.columns.map((col, i) => (
          <div key={i} className={`flex h-full flex-1 flex-col items-center ${i > 0 ? "border-l border-[#c8c8c8]" : ""}`}>
            {col.map(([name, art]) => (
              <button key={name} aria-label={name} className="grid h-[22px] w-full place-items-center"><Icon className="h-5 w-5">{art}</Icon></button>
            ))}
          </div>
        ))}
      </div>
      <div className="flex h-[11px] items-center justify-center bg-[#222] text-[8px] leading-none text-white">
        <span className="flex-1 text-center">{group.title}</span>
        {group.plus && <span className="pr-[2px] text-[9px] text-[#bbb]">+</span>}
      </div>
    </div>
  );
}

/* ---------- Grasshopper: canvas ---------- */

const Shell = "absolute flex items-stretch rounded-[3px] border shadow-[0_1px_2px_rgba(0,0,0,0.35)]";
const GrayShell = "border-[#333] bg-linear-to-b from-[#dcdce2] via-[#a3a3b3] via-20% to-[#8f8fa0]";

function NodeTitle({ children, className = "from-[#5a5a5a] via-[#3c3c3c] to-[#2e2e2e] text-white" }) {
  return (
    <div className={`my-px flex w-6 items-center justify-center rounded-[3px] border border-black bg-linear-to-b ${className}`}>
      <span className="rotate-180 text-[12px] leading-none font-bold [writing-mode:vertical-rl]">{children}</span>
    </div>
  );
}

function Capsule({ className, children }) {
  return (
    <div className={`absolute flex h-[19px] items-center justify-center rounded-[3px] border border-[#333] bg-linear-to-b from-[#d6d6de] via-[#a9a9b8] via-40% to-[#8b8b9b] leading-none shadow-[0_1px_2px_rgba(0,0,0,0.35)] ${className}`}>
      {children}
    </div>
  );
}

// Grips: left ones are cut by the node's edge, so they are drawn below the nodes
const GRIPS = [[71, 288], [172, 288], [72, 337], [161, 337], [260, 302], [260, 321], [260, 340], [328, 321], [388, 227], [467, 227], [525, 227], [525, 246], [525, 264], [587, 246]];

const VERTICALS = [92, 234, 375, 517, 659];
const HORIZONTALS = Array.from({ length: 13 }, (_, i) => 43 + Math.round(i * 47.2));

function Wire({ d }) {
  return (
    <>
      <path d={d} stroke="#4a4a46" strokeWidth="4" />
      <path d={d} stroke="#b5b2a8" strokeWidth="1.600" />
    </>
  );
}

function Canvas() {
  return (
    <main className="relative min-h-0 flex-1 overflow-hidden bg-[#cfcbc1] bg-[repeating-linear-gradient(45deg,#d1cdc3_0_1px,#c7c3b9_1px_2px,#d1cdc3_2px_3px)] text-[10px] text-[#1c1c1c]">
      <svg className="absolute inset-0 h-full w-full" fill="none" aria-hidden="true">
        <g stroke="#b0aca2">
          {VERTICALS.map((x) => <path key={x} d={`M${x + 0.5} 0v1200`} />)}
          {HORIZONTALS.map((y) => <path key={y} d={`M0 ${y + 0.5}h2400`} />)}
        </g>
        <Wire d="M172 288C215 288 215 302 259 302" />
        <Wire d="M161 337C210 337 210 321 259 321" />
        <Wire d="M330 321C392 321 325 227 387 227" />
        <path d="M468 227h56" stroke="#7cc43c" strokeWidth="4" strokeDasharray="13 3" />
        <path d="M469 227h55" stroke="#c4dba6" strokeWidth="1.500" strokeDasharray="11 5" />
        <g stroke="#9d9a92" strokeWidth="0.900">
          <path d="M66 284q-3 4 0 8M63 283q-4 5 0 10M60 282q-4 6 0 12" />
          <path d="M67 333q-3 4 0 8M64 332q-4 5 0 10M61 331q-4 6 0 12" />
        </g>
        {GRIPS.map(([x, y]) => <circle key={`${x},${y}`} cx={x} cy={y} r="3.500" fill="#fff" stroke="#000" strokeWidth="1.800" />)}
        {/* Compass */}
        <path d="m634 566 7-4v8z" fill="#111" stroke="#111" />
        <path d="m643 552 4-3M642 578l3 4M665 550l5 3M672 582l2-2" stroke="#111" strokeWidth="3" />
        <circle cx="658" cy="567" r="16" fill="#d9d9d9" stroke="#222" strokeWidth="2" />
        <circle cx="658" cy="567" r="13" fill="#f2f2f2" stroke="#888" strokeWidth="3" strokeDasharray="12 8" />
        <circle cx="658" cy="567" r="11" fill="#e2e2e2" />
        {/* Side handle */}
        <rect x="-1" y="568" width="6" height="21" fill="#ddd" stroke="#222" strokeWidth="1.500" />
        <path d="M0 578h5v10H0z" fill="#888" />
      </svg>

      <Capsule className="top-[279px] left-[71px] w-[101px]">Grp: Podium Floors</Capsule>
      <Capsule className="top-[328px] left-[72px] w-[89px]">Grp: Body Floors</Capsule>

      <div className={`${Shell} ${GrayShell} top-[291px] left-[260px] h-[61px] w-[68px]`}>
        <div className="flex w-6 flex-col items-center justify-around"><span>D1</span><span>D2</span><span>D3</span></div>
        <NodeTitle>Merge</NodeTitle>
        <div className="flex flex-1 items-center justify-center pr-1">R</div>
      </div>

      <div className={`${Shell} ${GrayShell} top-[194px] left-[388px] h-[68px] w-[79px]`}>
        <div className="flex w-[18px] items-center justify-center">G</div>
        <NodeTitle>Ungroup</NodeTitle>
        <div className="flex flex-1 items-center justify-between pr-[3px] pl-1">
          <span>O</span>
          <span className="grid h-[13px] w-[13px] place-items-center rounded-[2px] border border-[#555] bg-[#e2e2e2] leading-none text-[#666]">Y</span>
        </div>
      </div>

      <div className={`${Shell} top-[215px] left-[525px] h-[62px] w-[62px] border-[#3a6a14] bg-linear-to-b from-[#c2f78a] via-[#92ee3c] via-20% to-[#86e234] text-[#1e4a08]`}>
        <div className="flex w-5 flex-col items-end justify-around pr-1"><span>L</span><span>i</span><span>W</span></div>
        <NodeTitle className="from-[#3d6b3a] via-[#1f4a24] to-[#163a1b] text-[#c6f7b0]">Item</NodeTitle>
        <div className="flex flex-1 items-center justify-center pr-1">i</div>
      </div>
    </main>
  );
}

/* ---------- Grasshopper: window ---------- */

const GH_MENU = ["File", "Edit", "View", "Display", "Solution", "Help", "MetaHopper"];
const GH_TABS = [["Math", "w-[30px]"], ["Set", "w-[29px]"], ["Vec", "w-7"], ["Crv", "w-7"], ["Srf", "w-[25px]"]];
const GH_LETTERS = "MXTDPFHPjKMHLEATBHBDGET".split("");

const Caret = () => <svg viewBox="0 0 6 4" className="h-[3px] w-[5px] shrink-0"><path d="m0 0 3 4 3-4z" /></svg>;

function ToolButton({ name, active, children }) {
  return (
    <button aria-label={name} className={`grid h-[22px] w-[22px] shrink-0 place-items-center ${active ? "border border-[#2b8ae0] bg-[#d8eafc]" : ""}`}>
      <Icon className="h-[18px] w-[18px]">{children}</Icon>
    </button>
  );
}

function GrasshopperWindow() {
  return (
    <section className="flex min-h-0 min-w-0 flex-col overflow-hidden border-x border-t-2 border-b-[5px] border-[#474a6b] bg-[#f0f0f0] text-[9px]">
      <header className="flex h-6 shrink-0 items-center justify-between bg-white pl-[5px] text-[#1c1c1c]">
        <h1>Grasshopper - Visuals*</h1>
        <WindowButtons color="text-black" />
      </header>
      <nav className="flex h-[21px] shrink-0 items-center gap-[15px] bg-[#f9f9f9] pr-[7px] pl-[9px] text-[#1c1c1c]">
        {GH_MENU.map((item) => <button key={item}>{item}</button>)}
        <button className="ml-auto">Visuals</button>
      </nav>

      <div className="flex h-[18px] shrink-0 items-stretch text-[#6b6b6b]">
        <button className="w-[29px] rounded-t-[4px] border border-b-0 border-[#aaa] bg-white text-[#111]">Prm</button>
        {GH_TABS.map(([label, width]) => <button key={label} className={`pt-[2px] ${width}`}>{label}</button>)}
        {GH_LETTERS.map((letter, i) => <button key={i} className="flex-1 pt-[2px]">{letter}</button>)}
      </div>

      <div className="flex h-[160px] shrink-0 items-start gap-[3px] rounded-tr-[5px] border-t border-r border-b border-t-[#9a9a9a] border-r-[#9a9a9a] border-b-[#666] bg-linear-to-b from-[#d3d3d3] to-[#f0f0f0] pt-px pl-px">
        {RIBBON.map((group) => <RibbonGroup key={group.title} group={group} />)}
      </div>

      <div className="flex h-[26px] shrink-0 items-center bg-linear-to-b from-white to-[#f2f2f2] pr-[2px]">
        <ToolButton name="Open"><path d="M5 2h10l2 3v7H5z" fill="#fff" stroke="#555" /><path d="M2 18V8h6l2 2h8l-1 8z" fill="#67b83c" stroke="#2f6b14" /></ToolButton>
        <span className="w-[3px]" />
        <ToolButton name="Save"><path d="M1 2h18v17H3l-2-2z" fill="#2563c8" stroke="#0b2d6b" /><rect x="5" y="2" width="10" height="7" fill="#e6eefc" stroke="none" /><rect x="5" y="12" width="10" height="7" fill="#cdd8ea" stroke="none" /><path d="M11 13v5" stroke="#0b2d6b" strokeWidth="2" /></ToolButton>
        <span className="mr-[3px] ml-[3px] h-4 w-px bg-[#ccc]" />
        <span className="grid h-[19px] w-[110px]">
          <select aria-label="Zoom" className="col-start-1 row-start-1 appearance-none border border-[#888] bg-white px-[2px] text-[#1c1c1c]"><option>118%</option></select>
          <svg viewBox="0 0 8 8" className="pointer-events-none col-start-1 row-start-1 mr-[3px] h-2 w-2 self-center justify-self-end"><path d="m1 2.500 3 3 3-3" fill="none" stroke="#444" /></svg>
        </span>
        <span className="w-[2px]" />
        <ToolButton name="Zoom extents"><path d="M2 7V2h5M13 2h5v5M18 13v5h-5M7 18H2v-5" strokeWidth="3" /><path d="m8 8 4 4m0-4-4 4" strokeWidth="1.600" /></ToolButton>
        <span className="w-[3px]" /><Caret /><span className="w-1" />
        <ToolButton name="Preview"><path d="M1 10c5-8 13-8 18 0-5 7-13 7-18 0z" fill="#fff" /><circle cx="10" cy="9.500" r="4.500" fill="#2e8fd0" stroke="#124a78" /><circle cx="10" cy="9.500" r="2" fill="#000" /></ToolButton>
        <span className="w-[2px]" /><Caret /><span className="w-[3px]" />
        <ToolButton name="Sketch"><path d="m8 11 9-9 1 6-8 9-4 1z" fill="#e3371d" stroke="#8a1405" /><path d="m6 18 2-7 3 1 0 4z" fill="#f3c9a0" stroke="#8a1405" strokeWidth="0.800" /><path d="M1 7c4 0 4 1 3 4-2 5-1 7 2 7" strokeWidth="1.500" /></ToolButton>

        <div className="ml-auto flex items-center gap-px">
          <ToolButton name="No preview"><path d="m4 8 4-6h5l4 6-2 5H6z" fill="#ddd" stroke="#777" /><ellipse cx="10" cy="14" rx="7.500" ry="4.500" fill="#333" /><path d="M6 9h8" stroke="#888" /></ToolButton>
          <ToolButton name="Wireframe preview"><Cylinder body="#fff" cap="#fff" line="#333" /><path d="m5 9 7 7M9 5l7 7" stroke="#777" strokeWidth="0.900" /></ToolButton>
          <ToolButton name="Shaded preview" active><Cylinder body="#c11515" cap="#dd3a2a" line="#5c0000" /><path d="m5 10 4 5" stroke="#f08a7a" strokeWidth="1.800" /></ToolButton>
          <span className="mx-[5px] h-4 w-px bg-[#ccc]" />
          <ToolButton name="Document preview"><path d="M2 3c3 0 4 1 4 4s-1 8-3 10c3 2 7 2 10 0l5-5V6l-6-3-4 3" fill="#128e86" stroke="#06504c" /><ellipse cx="13.500" cy="7" rx="4" ry="2.500" transform="rotate(35 13 7)" fill="#35b5ac" stroke="#06504c" /></ToolButton>
          <ToolButton name="Selected preview"><Cylinder body="#e2e2e2" cap="#6fbf25" line="#444" /><path d="m6 5 5-3 6 4 1 6-3 2z" fill="#5cae1c" stroke="#265c06" /><ellipse cx="13" cy="6" rx="3.500" ry="2" transform="rotate(40 13 6)" fill="#b8e68a" stroke="#265c06" /><path d="m3 3 14 14" /></ToolButton>
          <ToolButton name="Mesh quality"><circle cx="10" cy="10" r="8" fill="url(#ballYellow)" /><path d="M10 2a8 8 0 0 0 0 16z" fill="#f08a1c" /><path d="M2 10c5 2 11 2 16 0" stroke="#777" strokeWidth="0.700" /></ToolButton>
          <span className="mx-px h-4 w-px bg-[#ccc]" />
          <ToolButton name="Mesh settings"><path d="m7 2 7 0 5 5-1 7-5 4H6l-4-5V6z" fill="url(#ballSky)" stroke="#1d4a9a" /></ToolButton>
          <Caret />
        </div>
      </div>

      <Canvas />

      <footer className="flex h-5 shrink-0 items-center gap-[3px] bg-[#fbfbfb] pt-px pr-[26px] pl-[2px] text-[#1c1c1c]">
        <Icon className="h-[13px] w-[13px]"><circle cx="10" cy="10" r="9" fill="#1b6fd0" stroke="#0b2d6b" /><path d="M10 4v8M10 14v2.500" stroke="#fff" strokeWidth="2.500" /><path d="M5 6c-1 3-1 6 0 8M15 6c1 3 1 6 0 8" stroke="#bfe0ff" /></Icon>
        <span>Save successfully completed... (170 seconds ago)</span>
        <span className="ml-auto text-[#777]">1.0.0007</span>
      </footer>
    </section>
  );
}

export default function App() {
  return (
    <div className="grid h-screen min-h-[640px] grid-cols-[770fr_686fr] bg-[#26262c] font-['Open_Sans',sans-serif]">
      <SharedDefs />
      <RhinoWindow />
      <GrasshopperWindow />
    </div>
  );
}
